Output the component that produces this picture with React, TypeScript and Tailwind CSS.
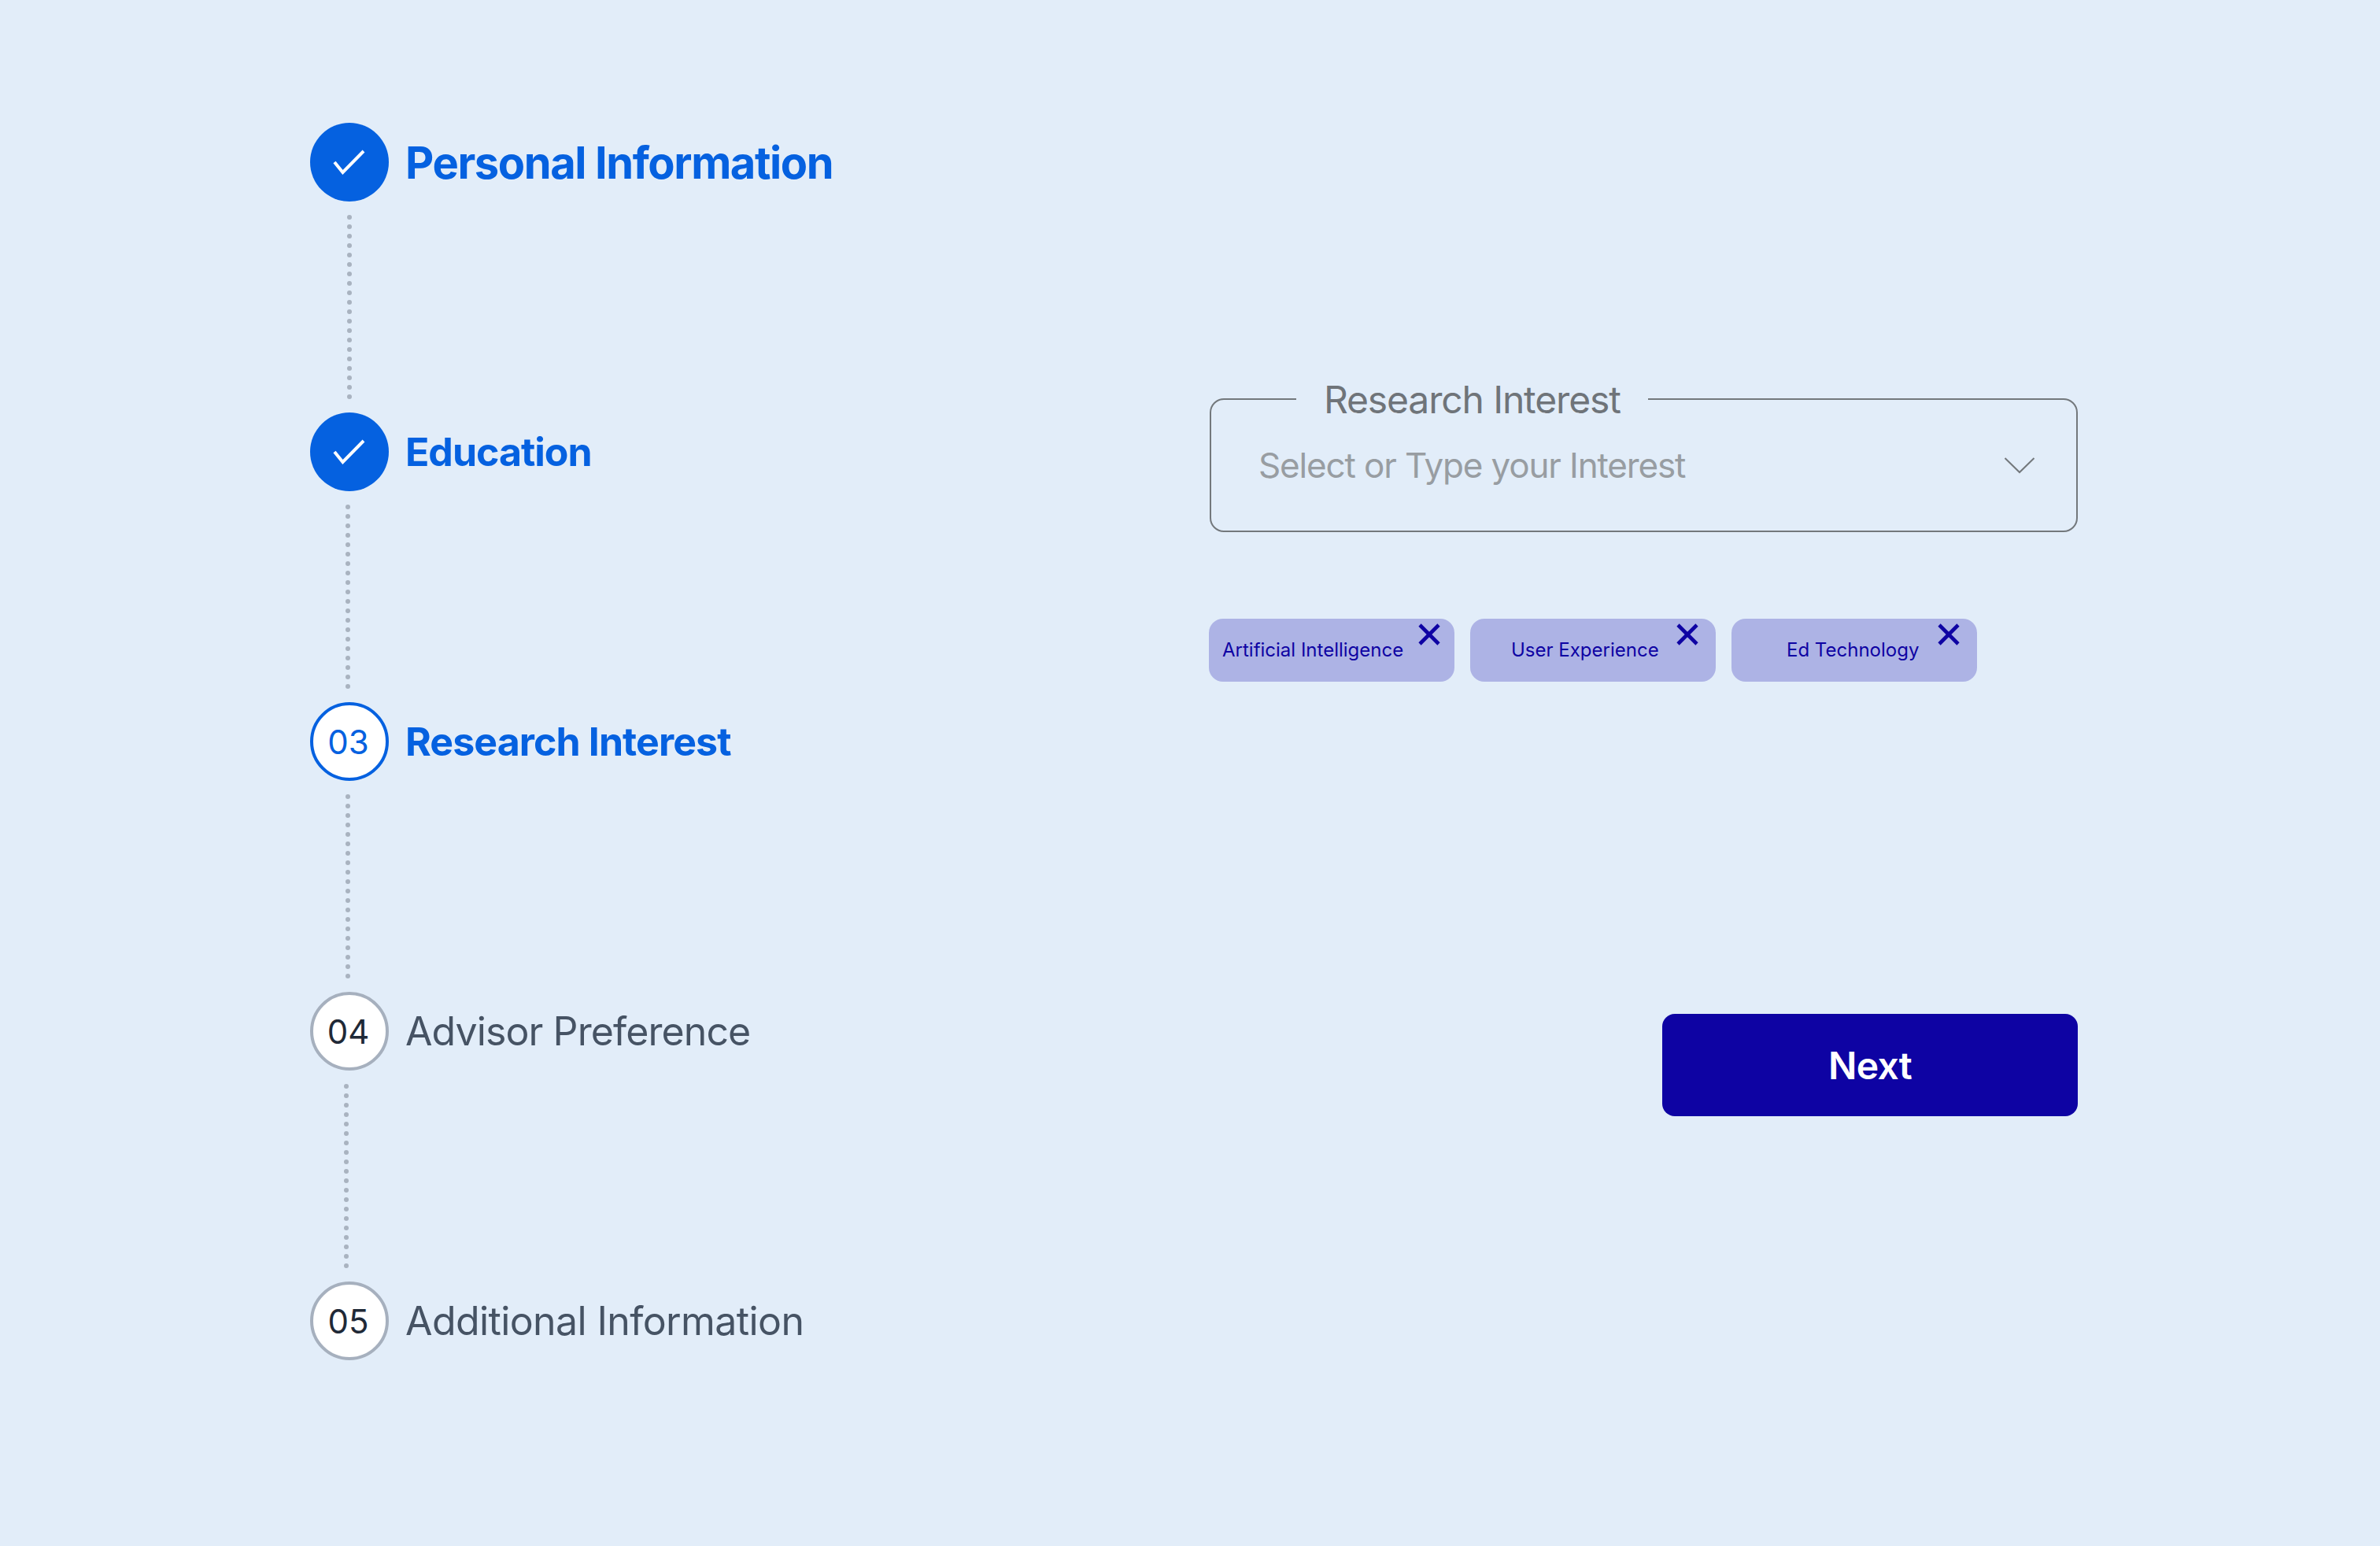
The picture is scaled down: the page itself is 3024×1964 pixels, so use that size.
import { X } from "lucide-react";

type Step = {
  label: string;
  num: string;
  state: "done" | "current" | "todo";
  text: string;
  lineClass: string;
};

const steps: Step[] = [
  { label: "Personal Information", num: "01", state: "done", text: "text-[56px] font-[650] tracking-[-1.4px] pt-[1px]", lineClass: "ml-[47px]" },
  { label: "Education", num: "02", state: "done", text: "text-[50px] font-[650] tracking-[-1px]", lineClass: "ml-[45px]" },
  { label: "Research Interest", num: "03", state: "current", text: "text-[50px] font-[650] tracking-[-0.9px]", lineClass: "ml-[45px]" },
  { label: "Advisor Preference", num: "04", state: "todo", text: "text-[50px] font-normal tracking-[-0.9px]", lineClass: "ml-[43px]" },
  { label: "Additional Information", num: "05", state: "todo", text: "text-[50px] font-normal tracking-[-0.6px]", lineClass: "" },
];

const chips = [
  { label: "Artificial Intelligence", pad: "pl-[17px]", x: "right-[8px]" },
  { label: "User Experience", pad: "pl-[52px]", x: "right-[12px]" },
  { label: "Ed Technology", pad: "pl-[70px]", x: "right-[12px]" },
];

const dots = Array.from({ length: 20 }, (_, i) => i);

function StepCircle({ step }: { step: Step }) {
  if (step.state === "done") {
    return (
      <div className="w-[100px] h-[100px] shrink-0 rounded-full bg-[#0561e0] flex items-center justify-center">
        <svg width="44" height="34" viewBox="0 0 44 34" fill="none">
          <path d="M3 17 L13.5 30 L40 3" stroke="white" strokeWidth="4" />
        </svg>
      </div>
    );
  }
  const current = step.state === "current";
  return (
    <div
      className={`w-[100px] h-[100px] shrink-0 rounded-full bg-white border-[4.5px] flex items-center justify-center pr-[3px] text-[42px] ${
        current ? "border-[#0561e0] text-[#0561e0]" : "border-[#a6b0be] text-[#1f2937]"
      }`}
    >
      {step.num}
    </div>
  );
}

export default function App() {
  return (
    <div className="min-h-screen h-[1964px] bg-[#e2edf9] flex pl-[394px] pt-[156px] font-['Inter',sans-serif]">
      {/* stepper */}
      <div className="w-[1143px] flex flex-col">
        {steps.map((step, i) => (
          <div key={step.num} className="flex flex-col">
            <div className="flex items-center gap-[21px] h-[100px]">
              <StepCircle step={step} />
              <span className={`${step.text} leading-none ${step.state === "todo" ? "text-[#465364]" : "text-[#0561e0]"}`}>
                {step.label}
              </span>
            </div>
            {i < steps.length - 1 && (
              <div className={`flex flex-col gap-[6px] pt-[17px] h-[268px] ${step.lineClass}`}>
                {dots.map((d) => (
                  <span key={d} className="block w-[6px] h-[6px] shrink-0 rounded-full bg-[#a9b3c0]" />
                ))}
              </div>
            )}
          </div>
        ))}
      </div>

      {/* form */}
      <div className="w-[1103px] flex flex-col pt-[321px]">
        <fieldset className="border-2 border-[#73787c] rounded-[18px] pl-[60px] pr-[52px]">
          <legend className="ml-[48px] px-[35px] pt-[1px] text-[48px] leading-[59px] tracking-[-1.15px] text-[#6f7479]">Research Interest</legend>
          <div className="h-[137px] pb-[30px] flex items-center justify-between">
            <span className="text-[44px] leading-none tracking-[-1.15px] text-[#989da2]">Select or Type your Interest</span>
            <svg width="40" height="22" viewBox="0 0 40 22" fill="none">
              <path d="M1.5 2 L20 20 L38.5 2" stroke="#73787c" strokeWidth="2" />
            </svg>
          </div>
        </fieldset>

        <div className="flex gap-[20px] mt-[110px] -ml-[1px]">
          {chips.map((chip) => (
            <div
              key={chip.label}
              className={`relative w-[312px] h-[80px] rounded-[18px] bg-[#adb3e5] flex items-center text-[24px] text-[#0e03a3] ${chip.pad}`}
            >
              {chip.label}
              <X className={`absolute -top-[4px] w-[48px] h-[48px] ${chip.x}`} strokeWidth={2.3} strokeLinecap="butt" />
            </div>
          ))}
        </div>

        <button className="self-end mt-[422px] w-[528px] h-[130px] rounded-[16px] bg-[#0e03a3] text-white text-[48px] font-semibold tracking-[-0.7px] pt-[2px]">
          Next
        </button>
      </div>
    </div>
  );
}
